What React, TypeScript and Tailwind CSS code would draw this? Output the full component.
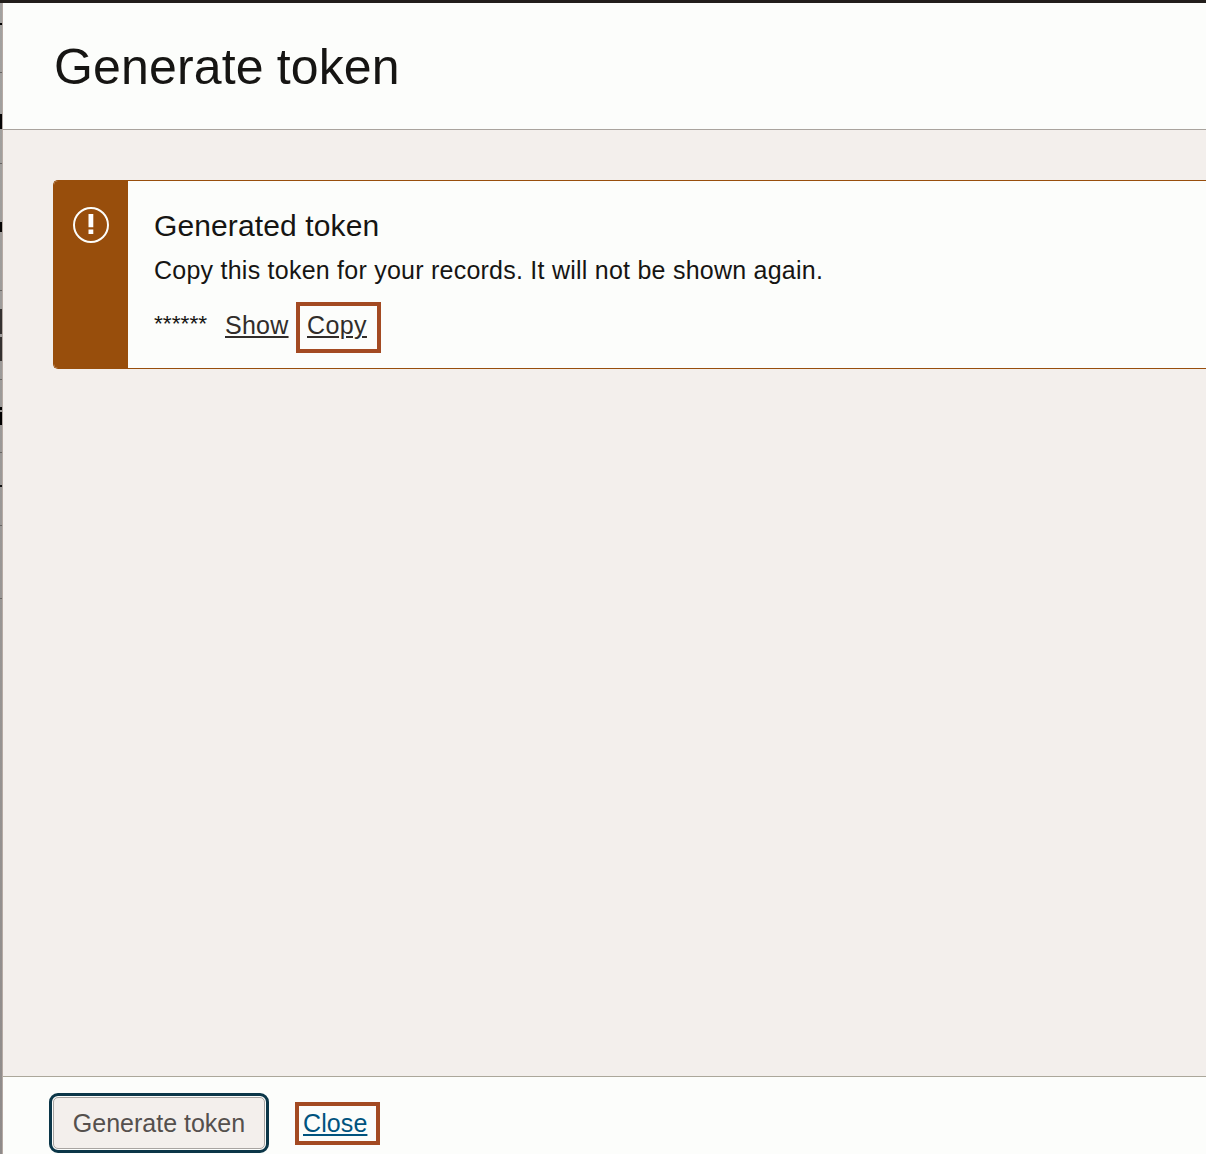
const edge: { h: number; color: string }[] = [
  { h: 20, color: 'transparent' },
  { h: 2, color: '#000000' },
  { h: 47, color: 'transparent' },
  { h: 1, color: '#686664' },
  { h: 41, color: 'transparent' },
  { h: 15, color: '#060606' },
  { h: 34, color: 'transparent' },
  { h: 1, color: '#686664' },
  { h: 58, color: 'transparent' },
  { h: 10, color: '#050505' },
  { h: 58, color: 'transparent' },
  { h: 1, color: '#686664' },
  { h: 18, color: 'transparent' },
  { h: 25, color: '#343130' },
  { h: 3, color: '#9b9998' },
  { h: 24, color: '#343130' },
  { h: 18, color: 'transparent' },
  { h: 1, color: '#686664' },
  { h: 27, color: 'transparent' },
  { h: 3, color: '#000000' },
  { h: 2, color: 'transparent' },
  { h: 13, color: '#000000' },
  { h: 27, color: 'transparent' },
  { h: 1, color: '#686664' },
  { h: 32, color: 'transparent' },
  { h: 2, color: '#111111' },
  { h: 38, color: 'transparent' },
  { h: 1, color: '#686664' },
  { h: 72, color: 'transparent' },
  { h: 1, color: '#686664' },
];

function PageEdge() {
  return (
    <div className="w-[3px] shrink-0 border-r border-[#b5aaa4] bg-linear-to-b from-[#a3a2a0] to-[#8f8b8a]">
      {edge.map((s, i) => (
        <div key={i} style={{ height: s.h, backgroundColor: s.color }} />
      ))}
    </div>
  );
}

function WarningIcon() {
  return (
    <svg className="h-9 w-9" viewBox="0 0 36 36" fill="none" aria-hidden="true">
      <circle cx="18" cy="18" r="17" stroke="#fcfdfb" strokeWidth="2" />
      <path d="M15.5 7h4.8v13.3h-4.8zM15.5 22.4h4.8v4.6h-4.8z" fill="#ffffff" />
    </svg>
  );
}

export default function App() {
  return (
    <div className="flex h-[1154px] w-full flex-col overflow-hidden bg-[#f3efec] font-['Liberation_Sans',Arial,sans-serif] text-[#161513]">
      <div className="h-[3px] shrink-0 bg-[#221e1b]" />
      <div className="flex min-h-0 flex-1">
        <PageEdge />
        <section className="flex min-w-0 flex-1 flex-col">
          <header className="h-[127px] shrink-0 border-b border-[#a9a39d] bg-[#fcfdfb] pt-[34px] pl-[51px]">
            <h1 className="text-[50px] leading-[60px] tracking-[0.15px] [word-spacing:-1px]">Generate token</h1>
          </header>

          <main className="flex-1 pt-[50px] pl-[50px]">
            <div className="flex h-[189px] overflow-hidden rounded-l-[5px] border border-r-0 border-[#984e0c] bg-[#fcfdfb]">
              <div className="flex w-[74px] shrink-0 justify-center bg-[#984e0c] pt-[26px]">
                <WarningIcon />
              </div>
              <div className="pt-[27px] pl-[26px] whitespace-nowrap">
                <h2 className="text-[30px] leading-9 tracking-[0.12px]">Generated token</h2>
                <p className="mt-[10px] text-[25px] leading-8 tracking-[0.24px]">
                  Copy this token for your records. It will not be shown again.
                </p>
                <div className="mt-4 flex text-[25px] leading-8 text-[#312d2a]">
                  <span className="mt-[5px] w-[71px] text-[22.8px] text-[#161513]">******</span>
                  <a href="#show" className="mt-[7px] w-[63px] tracking-[0.25px] underline decoration-2 underline-offset-2">
                    Show
                  </a>
                  <span className="ml-2 flex h-[51px] w-[85px] border-4 border-[#a34a22] pt-[3px] pl-[7px]">
                    <a href="#copy" className="tracking-[0.4px] underline decoration-2 underline-offset-2">
                      Copy
                    </a>
                  </span>
                </div>
              </div>
            </div>
          </main>

          <footer className="flex h-[78px] shrink-0 border-t border-[#aba79a] bg-[#fcfdfb] pt-4 pl-[46px] text-[25px]">
            <button className="flex h-[60px] w-[220px] rounded-[9px] border-3 border-[#0b3648] bg-[#fcfdfb] p-px">
              <span className="h-full w-full rounded-[5px] border border-[#a8a4a1] bg-[#f3efec] pt-[9px] leading-8 text-[#55504d]">
                Generate token
              </span>
            </button>
            <span className="mt-[9px] ml-[26px] flex h-[43px] w-[85px] border-4 border-[#a34a22] pt-px pl-1">
              <a href="#close" className="leading-8 tracking-[0.1px] text-[#00537e] underline decoration-2 underline-offset-2">
                Close
              </a>
            </span>
          </footer>
        </section>
      </div>
    </div>
  );
}
